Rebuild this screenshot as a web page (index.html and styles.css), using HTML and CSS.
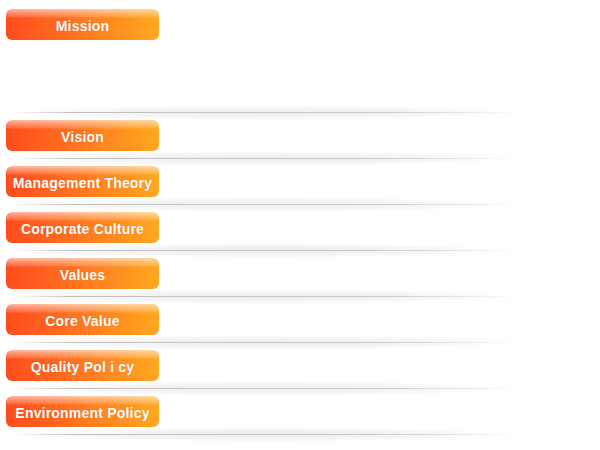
FILE: index.html
```html
<!DOCTYPE html>
<html>
<head>
<meta charset="utf-8">
<link rel="stylesheet" href="styles.css">
</head>
<body>
<div class="page">
  <section class="item item-first">
    <div class="btn">Mission</div>
    <div class="content"></div>
    <div class="sep"><div class="line"></div></div>
  </section>
  <section class="item">
    <div class="btn">Vision</div>
    <div class="sep"><div class="line"></div></div>
  </section>
  <section class="item">
    <div class="btn">Management Theory</div>
    <div class="sep"><div class="line"></div></div>
  </section>
  <section class="item">
    <div class="btn">Corporate Culture</div>
    <div class="sep"><div class="line"></div></div>
  </section>
  <section class="item">
    <div class="btn">Values</div>
    <div class="sep"><div class="line"></div></div>
  </section>
  <section class="item">
    <div class="btn">Core Value</div>
    <div class="sep"><div class="line"></div></div>
  </section>
  <section class="item">
    <div class="btn">Quality Pol i cy</div>
    <div class="sep"><div class="line"></div></div>
  </section>
  <section class="item">
    <div class="btn">Environment Policy</div>
    <div class="sep"><div class="line"></div></div>
  </section>
</div>
</body>
</html>
```
FILE: styles.css
```css
html, body {
  margin: 0;
  padding: 0;
  background: #ffffff;
}
.page {
  padding-top: 9px;
  width: 600px;
  font-family: "Liberation Sans", Arial, sans-serif;
}
.item {
  display: flex;
  flex-direction: column;
}
.btn {
  margin-left: 6px;
  width: 153px;
  height: 31px;
  line-height: 34px;
  border-radius: 6px;
  background:
    linear-gradient(to bottom, rgba(255,255,255,0.6) 0, rgba(255,255,255,0.4) 3px, rgba(255,255,255,0.15) 8px, rgba(255,255,255,0) 9px),
    linear-gradient(to right, #ff4c1e 0%, #ff6a20 35%, #ff8c20 70%, #ffa81f 100%);
  color: #ffffff;
  font-weight: bold;
  font-size: 14px;
  letter-spacing: 0.2px;
  text-align: center;
  white-space: nowrap;
  text-shadow: 0 0 1px rgba(140,40,0,0.35);
  box-sizing: border-box;
}
.content {
  height: 65px;
}
.sep {
  position: relative;
  height: 15px;
  width: 505px;
  margin-left: 12px;
  background: radial-gradient(ellipse 50% 50% at 50% 50%, rgba(0,0,0,0.07) 0%, rgba(0,0,0,0.045) 60%, rgba(0,0,0,0) 100%);
}
.line {
  position: absolute;
  left: 0;
  right: 0;
  top: 7px;
  height: 1px;
  background: linear-gradient(to right, rgba(190,190,190,0) 0%, rgba(190,190,190,0.95) 12%, rgba(200,200,200,0.95) 72%, rgba(210,210,210,0) 100%);
}
```
